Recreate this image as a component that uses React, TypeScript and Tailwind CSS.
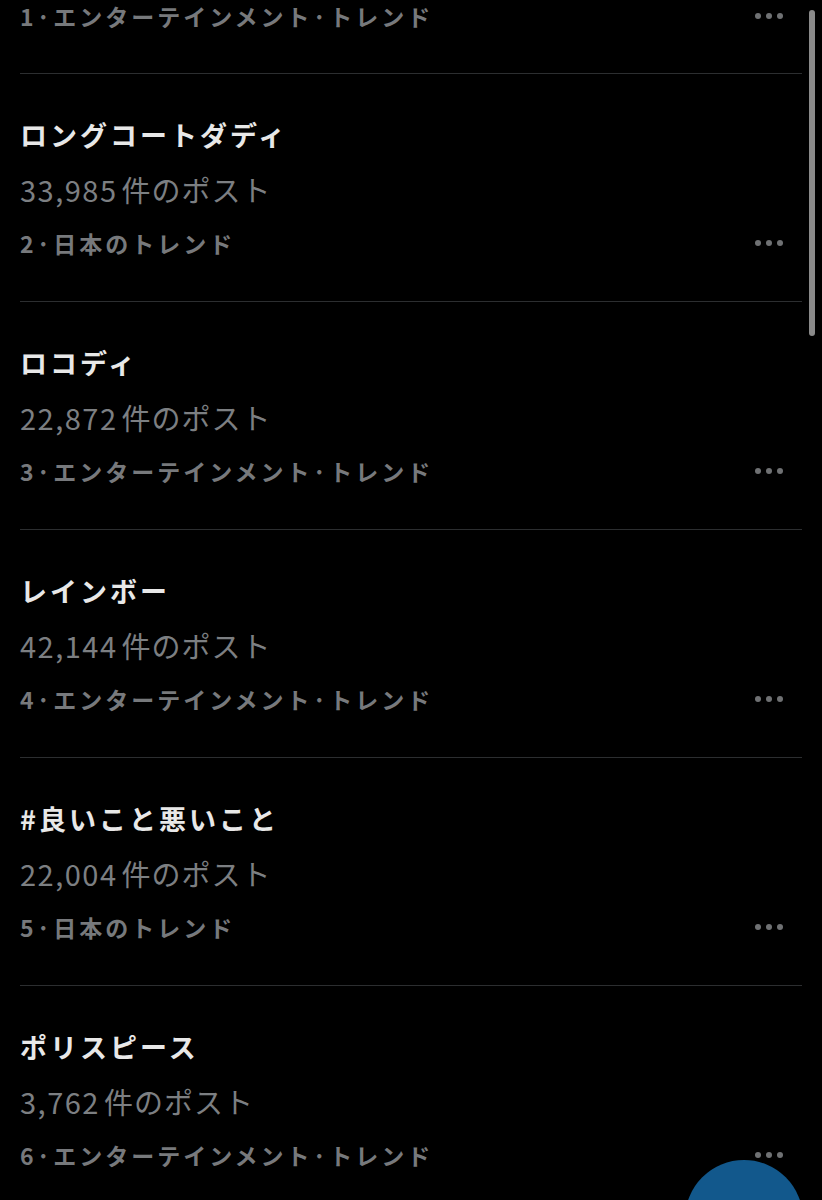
import React from 'react';

interface Trend {
  rank: number;
  title: string;
  posts: string;
  category: string;
}

const trends: Trend[] = [
  { rank: 2, title: 'ロングコートダディ', posts: '33,985', category: '日本のトレンド' },
  { rank: 3, title: 'ロコディ', posts: '22,872', category: 'エンターテインメント·トレンド' },
  { rank: 4, title: 'レインボー', posts: '42,144', category: 'エンターテインメント·トレンド' },
  { rank: 5, title: '#良いこと悪いこと', posts: '22,004', category: '日本のトレンド' },
  { rank: 6, title: 'ポリスピース', posts: '3,762', category: 'エンターテインメント·トレンド' },
];

const font = { fontFamily: '"Noto Sans CJK JP", "Noto Sans", sans-serif' };

function MoreDots() {
  return (
    <svg width="30" height="8" viewBox="0 0 30 8" className="shrink-0">
      <circle cx="4" cy="4" r="3" fill="#6f7173" />
      <circle cx="15" cy="4" r="3" fill="#6f7173" />
      <circle cx="26" cy="4" r="3" fill="#6f7173" />
    </svg>
  );
}

function Category({ rank, text }: { rank: number; text: string }) {
  return (
    <span className="text-[23px] font-bold leading-[26px] tracking-[3px] text-[#77797c]">
      {rank}·{text}
    </span>
  );
}

export default function App() {
  return (
    <div className="relative h-[1200px] w-[822px] overflow-hidden bg-black" style={font}>
      {/* partial item cut off at the top */}
      <div className="px-5 pt-[2px] pb-[43px]">
        <div className="flex h-[28px] items-center justify-between pr-[18px]">
          <Category rank={1} text="エンターテインメント·トレンド" />
          <MoreDots />
        </div>
      </div>

      {trends.map((t) => (
        <div key={t.rank} className="mx-5 border-t border-[#2c2e30] pt-[34px] pb-[32px]">
          <div className="h-[54px] text-[27px] font-bold leading-[54px] tracking-[3px] text-[#e8e8e8]">
            {t.title}
          </div>
          <div className="h-[54px] text-[29px] font-normal leading-[54px] tracking-[1px] text-[#7c7f82]">
            <span className="mr-[4px] tracking-[1.5px]">{t.posts}</span>件のポスト
          </div>
          <div className="flex h-[53px] items-center justify-between pr-[18px]">
            <Category rank={t.rank} text={t.category} />
            <MoreDots />
          </div>
        </div>
      ))}

      {/* scroll indicator */}
      <div className="absolute left-[809px] top-[10px] h-[326px] w-[6px] rounded-full bg-[#8a8a8a]" />

      {/* compose button, mostly below the fold */}
      <div className="absolute left-[685px] top-[1160px] h-[118px] w-[118px] rounded-full bg-[#12588c]" />
    </div>
  );
}
